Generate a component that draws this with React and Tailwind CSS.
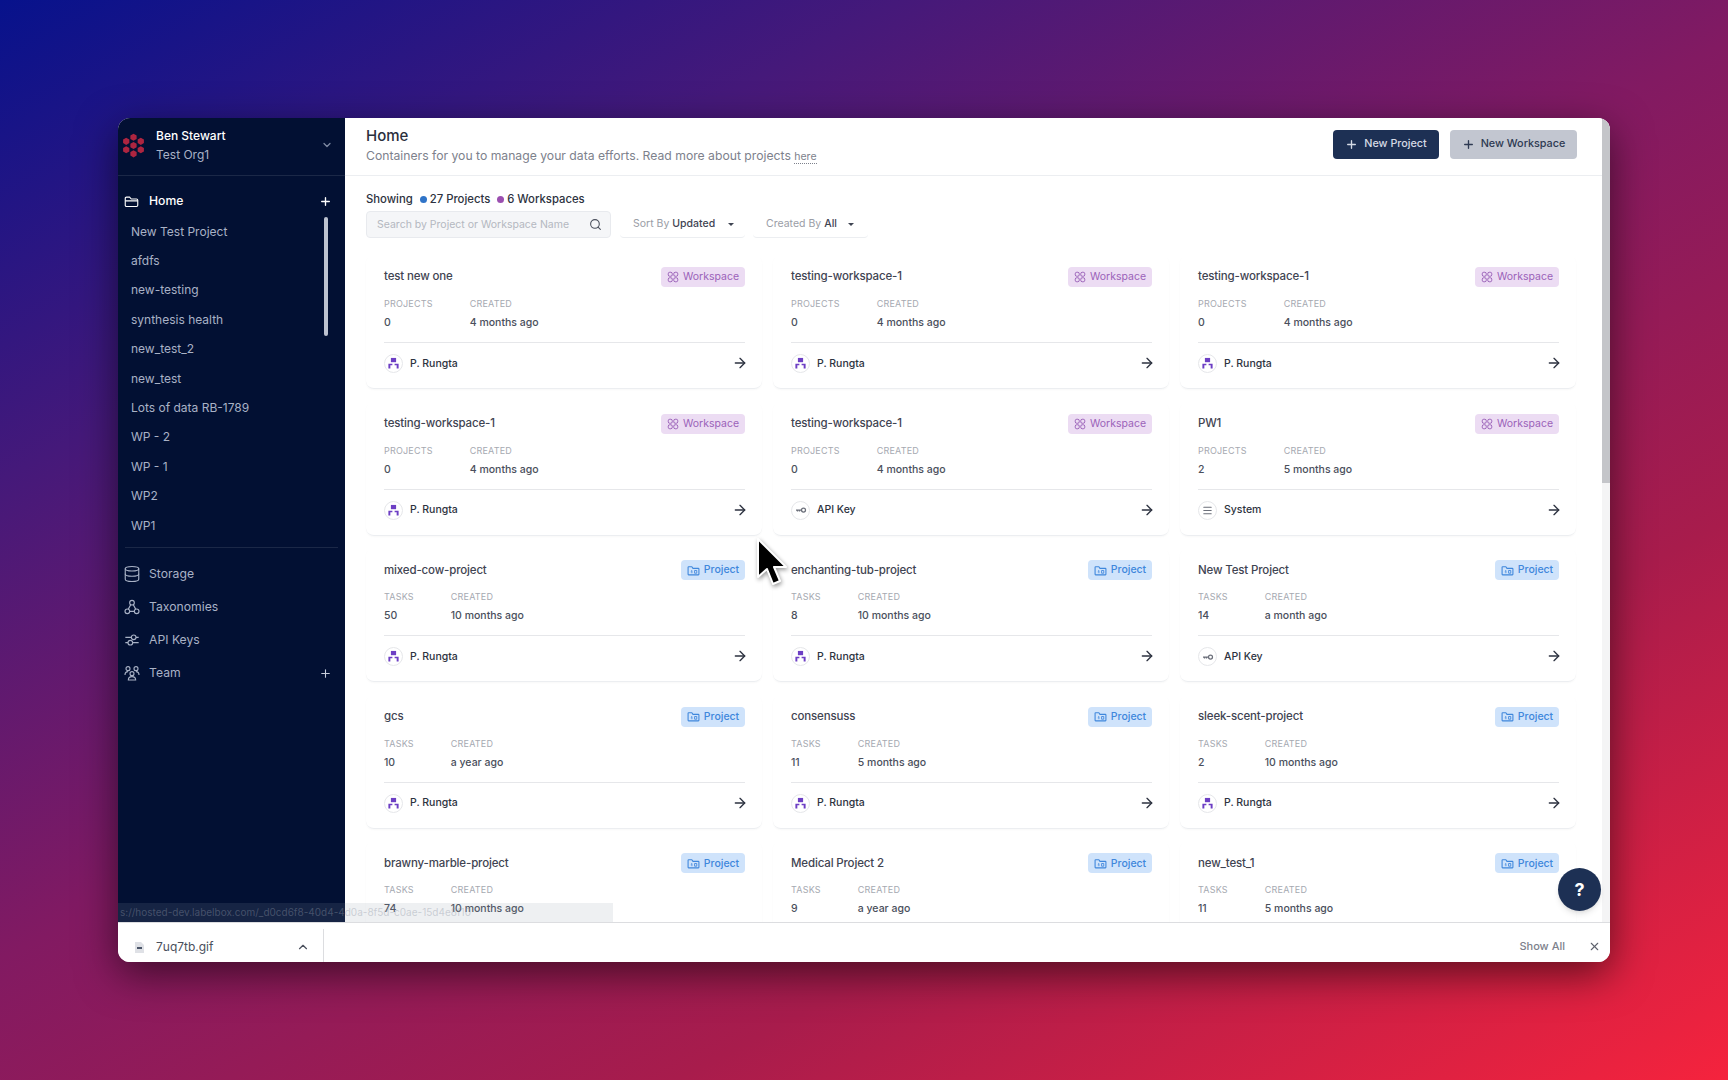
import React from "react";
import { Plus, ArrowRight, ChevronDown, ChevronUp, Search, X, Database, Menu } from "lucide-react";

const sidebarItems = [
  "New Test Project", "afdfs", "new-testing", "synthesis health", "new_test_2", "new_test",
  "Lots of data RB-1789", "WP - 2", "WP - 1", "WP2", "WP1",
];

const cards = [
  { name: "test new one", type: "workspace", count: 0, created: "4 months ago", owner: "P. Rungta" },
  { name: "testing-workspace-1", type: "workspace", count: 0, created: "4 months ago", owner: "P. Rungta" },
  { name: "testing-workspace-1", type: "workspace", count: 0, created: "4 months ago", owner: "P. Rungta" },
  { name: "testing-workspace-1", type: "workspace", count: 0, created: "4 months ago", owner: "P. Rungta" },
  { name: "testing-workspace-1", type: "workspace", count: 0, created: "4 months ago", owner: "API Key" },
  { name: "PW1", type: "workspace", count: 2, created: "5 months ago", owner: "System" },
  { name: "mixed-cow-project", type: "project", count: 50, created: "10 months ago", owner: "P. Rungta" },
  { name: "enchanting-tub-project", type: "project", count: 8, created: "10 months ago", owner: "P. Rungta" },
  { name: "New Test Project", type: "project", count: 14, created: "a month ago", owner: "API Key" },
  { name: "gcs", type: "project", count: 10, created: "a year ago", owner: "P. Rungta" },
  { name: "consensuss", type: "project", count: 11, created: "5 months ago", owner: "P. Rungta" },
  { name: "sleek-scent-project", type: "project", count: 2, created: "10 months ago", owner: "P. Rungta" },
  { name: "brawny-marble-project", type: "project", count: 74, created: "10 months ago", owner: "P. Rungta" },
  { name: "Medical Project 2", type: "project", count: 9, created: "a year ago", owner: "P. Rungta" },
  { name: "new_test_1", type: "project", count: 11, created: "5 months ago", owner: "P. Rungta" },
];

function Logo() {
  const cells = [[12, 4], [5, 8], [19, 8], [12, 12], [5, 16], [19, 16], [12, 20]];
  return (
    <svg width="25" height="25" viewBox="0 0 24 24" className="shrink-0">
      {cells.map(([x, y], i) => (
        <polygon
          key={i}
          points={`${x},${y - 3.4} ${x + 3},${y - 1.7} ${x + 3},${y + 1.7} ${x},${y + 3.4} ${x - 3},${y + 1.7} ${x - 3},${y - 1.7}`}
          fill="#ad2540"
        />
      ))}
    </svg>
  );
}

function FolderIcon() {
  return (
    <svg width="15" height="15" viewBox="0 0 24 24" fill="none" stroke="currentColor" strokeWidth="1.8" strokeLinejoin="round">
      <path d="M2 7a2 2 0 0 1 2-2h5l2.5 3H20a2 2 0 0 1 2 2v8a2 2 0 0 1-2 2H4a2 2 0 0 1-2-2z" />
      <path d="M2 11h20" />
    </svg>
  );
}

function TreeIcon() {
  return (
    <svg width="16" height="16" viewBox="0 0 24 24" fill="none" stroke="currentColor" strokeWidth="1.7" className="shrink-0">
      <circle cx="12" cy="5.5" r="3.5" />
      <circle cx="5" cy="18.5" r="3.5" />
      <circle cx="19" cy="18.5" r="3.5" />
      <path d="M10 8.5 6.5 15.2M14 8.5l3.5 6.7M8.5 18.5h7" />
    </svg>
  );
}

function SlidersIcon() {
  return (
    <svg width="16" height="16" viewBox="0 0 24 24" fill="none" stroke="currentColor" strokeWidth="1.7" className="shrink-0">
      <path d="M2 8h9M18 8h4M2 16h4M13 16h9" />
      <circle cx="14.5" cy="8" r="3.5" />
      <circle cx="9.5" cy="16" r="3.5" />
    </svg>
  );
}

function TeamIcon() {
  return (
    <svg width="16" height="16" viewBox="0 0 24 24" fill="none" stroke="currentColor" strokeWidth="1.7" className="shrink-0">
      <circle cx="6" cy="5.5" r="3" />
      <circle cx="18" cy="5.5" r="3" />
      <circle cx="12" cy="13" r="3" />
      <path d="M1.5 15c0-3 1.5-5 4.5-5M22.5 15c0-3-1.500-5-4.500-5M6.500 22.500c0-3 2-5 5.500-5s5.500 2 5.500 5z" />
    </svg>
  );
}

function WorkspaceGlyph() {
  return (
    <svg width="12" height="12" viewBox="0 0 24 24" fill="none" stroke="currentColor" strokeWidth="2">
      <rect x="2.500" y="2.500" width="8" height="8" rx="3" />
      <rect x="13.500" y="2.500" width="8" height="8" rx="3" />
      <rect x="2.500" y="13.500" width="8" height="8" rx="3" />
      <rect x="13.500" y="13.500" width="8" height="8" rx="3" />
    </svg>
  );
}

function ProjectGlyph() {
  return (
    <svg width="13" height="13" viewBox="0 0 24 24" fill="none" stroke="currentColor" strokeWidth="2" strokeLinejoin="round">
      <path d="M2 6a1 1 0 0 1 1-1h6l2 3h10a1 1 0 0 1 1 1v10a1 1 0 0 1-1 1H3a1 1 0 0 1-1-1z" />
      <path d="M9 17v-5l-2 2M14 12h4v5h-4z" strokeWidth="1.600" />
    </svg>
  );
}

function OwnerAvatar({ owner }) {
  return (
    <span className="flex h-[19px] w-[19px] shrink-0 items-center justify-center rounded-full border border-[#e6e7ea] bg-white text-[#6b6f7a]">
      {owner === "P. Rungta" && (
        <svg width="13" height="13" viewBox="0 0 14 14" fill="#6d3fc4">
          <path d="M4.200 1h5.600v4.600H4.200z" />
          <path d="M1.500 7.200h4.300v1.800H3.600v3.500H1.500zM8.200 7.200h4.300v5.300h-2.100V9H8.200z" />
        </svg>
      )}
      {owner === "API Key" && (
        <svg width="12" height="12" viewBox="0 0 24 24" fill="none" stroke="currentColor" strokeWidth="2.500">
          <circle cx="17" cy="12" r="4" />
          <path d="M13 12H2M5 12v3M9 12v3" />
        </svg>
      )}
      {owner === "System" && <Menu size={11} strokeWidth={2.500} />}
    </span>
  );
}

function Card({ card }) {
  const isWorkspace = card.type === "workspace";
  return (
    <div className="flex h-[134px] flex-col rounded-lg border-b border-[#eceef1] pl-[18px] pr-[17px] pt-[12px] shadow-[0_1px_2px_rgba(0,0,0,0.03)]">
      <div className="flex h-[20px] items-center justify-between">
        <span className="text-[11.500px] font-medium tracking-[-0.15px] text-[#3f4452]">{card.name}</span>
        {isWorkspace ? (
          <span className="flex h-[20px] w-[84px] items-center justify-center gap-[4px] rounded bg-[#ecdcf3] text-[10.500px] text-[#9b62b9]">
            <WorkspaceGlyph />
            Workspace
          </span>
        ) : (
          <span className="flex h-[20px] w-[64px] items-center justify-center gap-[4px] rounded bg-[#cfe3fb] text-[10.500px] font-medium text-[#3f87dc]">
            <ProjectGlyph />
            Project
          </span>
        )}
      </div>
      <div className="mt-[10px] flex gap-[37px]">
        <div className="flex flex-col">
          <span className="text-[9px] leading-[14px] tracking-[0.2px] text-[#a6a9b1]">{isWorkspace ? "PROJECTS" : "TASKS"}</span>
          <span className="mt-[4px] text-[10.500px] font-medium leading-[16px] text-[#4a4f5c]">{card.count}</span>
        </div>
        <div className="flex flex-col">
          <span className="text-[9px] leading-[14px] tracking-[0.2px] text-[#a6a9b1]">CREATED</span>
          <span className="mt-[4px] text-[10.500px] font-medium leading-[16px] text-[#4a4f5c]">{card.created}</span>
        </div>
      </div>
      <div className="mt-[11px] flex h-[42px] items-center justify-between border-t border-[#e6e7ea]">
        <span className="flex items-center gap-[7px] text-[10.500px] font-medium text-[#2d3240]">
          <OwnerAvatar owner={card.owner} />
          {card.owner}
        </span>
        <ArrowRight size={16} strokeWidth={2} className="-mr-[3px] mb-[1px] text-[#2d3240]" />
      </div>
    </div>
  );
}

function Sidebar() {
  return (
    <aside className="relative flex w-[227px] shrink-0 flex-col bg-[#021033] text-[#a9b2c6]">
      <div className="flex h-[58px] shrink-0 items-center border-b border-white/10 pb-[2px] pl-[3px] pr-[12px]">
        <Logo />
        <div className="ml-[10px] flex flex-col">
          <span className="text-[12px] font-medium leading-[18px] text-white">Ben Stewart</span>
          <span className="text-[12px] leading-[19px] text-[#aab3c7]">Test Org1</span>
        </div>
        <ChevronDown size={12} strokeWidth={2.500} className="mb-[2px] ml-auto text-[#7f8aa3]" />
      </div>
      <div className="mt-[10px] flex h-[30px] items-center pl-[6px] pr-[13px] text-white">
        <FolderIcon />
        <span className="ml-[10px] text-[12.200px] font-medium">Home</span>
        <Plus size={13} strokeWidth={2.500} className="ml-auto" />
      </div>
      <div className="mt-[1px] flex flex-col pl-[13px]">
        {sidebarItems.map((item) => (
          <div key={item} className="flex h-[29.400px] items-center text-[12px]">{item}</div>
        ))}
      </div>
      <div className="absolute left-[206px] top-[99px] h-[119px] w-[4px] rounded bg-[#bcc2d0]" />
      <div className="mx-[7px] mt-[7px] border-t border-white/10" />
      <div className="mt-[9.500px] flex flex-col pl-[6px] pr-[13px]">
        {[
          ["Storage", <Database key="s" size={18} strokeWidth={1.500} className="shrink-0" />],
          ["Taxonomies", <TreeIcon key="t" />],
          ["API Keys", <SlidersIcon key="a" />],
          ["Team", <TeamIcon key="m" />],
        ].map(([label, icon]) => (
          <div key={label} className="flex h-[33px] items-center text-[12.200px]">
            <span className="flex w-[15px] justify-center">{icon}</span>
            <span className="ml-[10px]">{label}</span>
            {label === "Team" && <Plus size={13} strokeWidth={2} className="ml-auto text-[#c8cedb]" />}
          </div>
        ))}
      </div>
    </aside>
  );
}

function Content() {
  return (
    <main className="flex min-w-0 flex-1 flex-col overflow-hidden bg-white">
      <header className="flex h-[58px] shrink-0 items-center justify-between border-b border-[#eceef1] pl-[21px] pr-[25px]">
        <div className="flex flex-col">
          <span className="text-[15px] font-medium leading-[20px] text-[#2a2f3d]">Home</span>
          <span className="text-[12.200px] leading-[20px] text-[#7d818c]">
            Containers for you to manage your data efforts. Read more about projects{" "}
            <span className="border-b border-dotted border-[#7d818c] text-[10.500px]">here</span>
          </span>
        </div>
        <div className="flex items-center gap-[11px] pb-[4px]">
          <button className="flex h-[29px] w-[106px] items-center justify-center gap-[6px] rounded bg-[#1d3054] text-[10.800px] font-medium text-[#d5dae5]">
            <Plus size={13} strokeWidth={2.500} />
            New Project
          </button>
          <button className="flex h-[29px] w-[127px] items-center justify-center gap-[6px] rounded bg-[#c2c6d0] text-[10.800px] font-medium text-[#2e3a52]">
            <Plus size={13} strokeWidth={2.500} />
            New Workspace
          </button>
        </div>
      </header>
      <div className="pl-[21px] pt-[16px]">
        <div className="flex h-[14px] items-center text-[11.300px] font-medium text-[#2d3240]">
          Showing
          <span className="ml-[7px] h-[7px] w-[7px] rounded-full bg-[#2f74c8]" />
          <span className="ml-[3px]">27 Projects</span>
          <span className="ml-[7px] h-[7px] w-[7px] rounded-full bg-[#9b4fb0]" />
          <span className="ml-[3px]">6 Workspaces</span>
        </div>
        <div className="mt-[5px] flex h-[27px] items-center">
          <div className="flex h-[27px] w-[245px] items-center justify-between rounded border border-[#e8eaee] bg-[#f5f6f8] pl-[10px] pr-[8px]">
            <input
              readOnly
              placeholder="Search by Project or Workspace Name"
              className="w-[205px] bg-transparent text-[10.500px] outline-none placeholder:text-[#b4b8c0]"
            />
            <Search size={13} strokeWidth={2} className="text-[#4a4f5c]" />
          </div>
          <div className="ml-[9px] flex h-[27px] w-[125px] items-center rounded border-b border-[#eceef1] pl-[13px] text-[10.500px] text-[#9a9da6]">
            Sort By<span className="ml-[3px] font-medium text-[#3f4452]">Updated</span>
            <span className="ml-[13px] border-x-[3px] border-t-[3px] border-x-transparent border-t-[#3f4452]" />
          </div>
          <div className="ml-[8px] flex h-[27px] w-[115px] items-center rounded border-b border-[#eceef1] pl-[13px] text-[10.500px] text-[#9a9da6]">
            Created By<span className="ml-[3px] font-medium text-[#3f4452]">All</span>
            <span className="ml-[11px] border-x-[3px] border-t-[3px] border-x-transparent border-t-[#3f4452]" />
          </div>
        </div>
        <div className="mt-[17px] grid grid-cols-[repeat(3,396px)] gap-x-[11px] gap-y-[12.600px]">
          {cards.map((card, i) => (
            <Card key={i} card={card} />
          ))}
        </div>
      </div>
    </main>
  );
}

export default function App() {
  return (
    <div className="h-[1080px] w-[1728px] overflow-hidden bg-[linear-gradient(152deg,#07128c_0%,#45197a_24%,#821a62_48%,#a81c4c_72%,#f5233d_100%)] pl-[118px] pt-[118px] font-['Inter',sans-serif]">
      <div className="relative flex h-[844px] w-[1492px] flex-col overflow-hidden rounded-xl bg-white shadow-[0_12px_40px_rgba(0,0,0,0.55)]">
        <div className="flex min-h-0 flex-1">
          <Sidebar />
          <Content />
          <div className="w-[8px] shrink-0 bg-[#f4f4f5]">
            <div className="h-[365px] bg-[#c4c5c9]" />
          </div>
        </div>
        <div className="flex h-[40px] shrink-0 items-end border-t border-[#dcdde0] bg-white">
          <div className="flex h-[33px] w-[206px] items-center border-r border-[#dcdde0] pl-[17px] pr-[13px] pt-[3px] text-[12px] text-[#4a4f5c]">
            <svg width="9" height="11" viewBox="0 0 9 11" className="shrink-0">
              <path d="M0 0h6l3 3v8H0z" fill="#dfe1e6" />
              <path d="M2 5h5v2H2z" fill="#4a5568" />
            </svg>
            <span className="ml-[12px]">7uq7tb.gif</span>
            <ChevronUp size={14} strokeWidth={2} className="ml-auto" />
          </div>
          <div className="ml-auto flex h-[33px] items-center pt-[2px]">
            <span className="text-[11px] font-medium text-[#7d818c]">Show All</span>
            <X size={13} strokeWidth={2} className="ml-[23px] mr-[9px] text-[#5f636e]" />
          </div>
        </div>
        {/* browser link preview, sits over the page */}
        <div className="absolute bottom-[40px] left-0 flex h-[19px] w-[495px] items-center overflow-hidden whitespace-nowrap bg-[#8f97a6]/15 pl-[2px] text-[10px] text-[#8f97a6]/40">
          s://hosted-dev.labelbox.com/_d0cd6f8-40d4-4d0a-8f5d-c0ae-15d4e8f10
        </div>
        <button className="absolute bottom-[51px] right-[9px] flex h-[43px] w-[43px] items-center justify-center rounded-full bg-[#1d3054] text-[18px] font-bold text-white shadow-md">
          ?
        </button>
        <svg width="34" height="52" viewBox="0 0 34 52" className="absolute left-[637px] top-[419px] drop-shadow-[1px_2px_2px_rgba(0,0,0,0.4)]">
          <path d="M3 2v38l9-8 6 15 7-3-6-14h12z" fill="#000" stroke="#fff" strokeWidth="2" strokeLinejoin="round" />
        </svg>
      </div>
    </div>
  );
}
